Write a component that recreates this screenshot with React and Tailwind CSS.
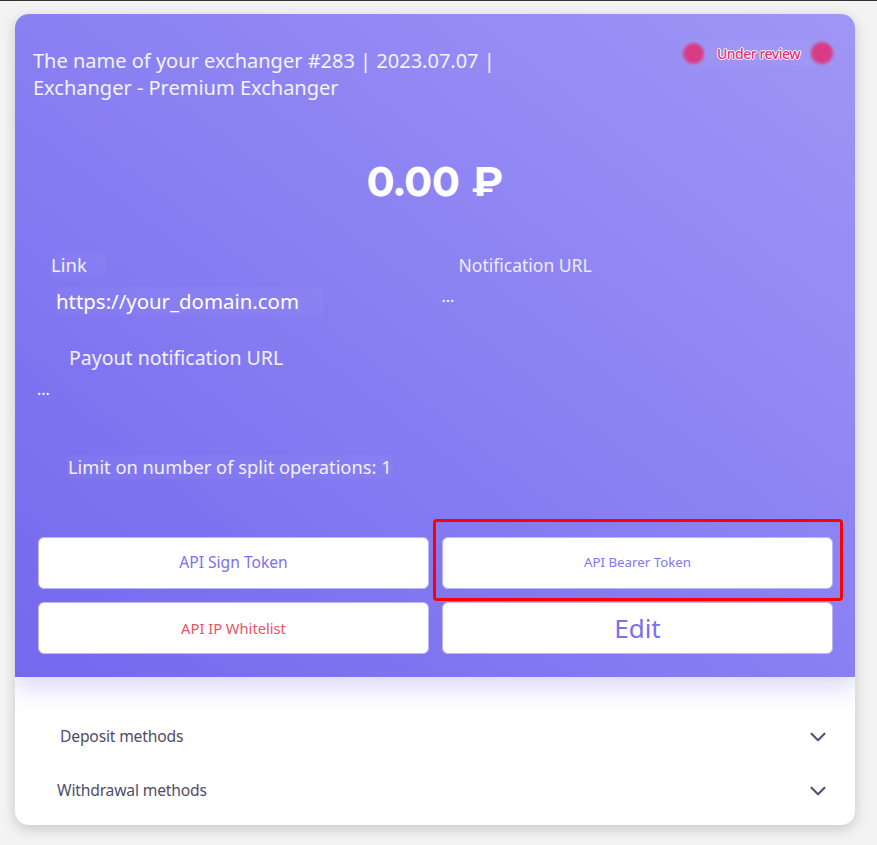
import React from 'react'
import { ChevronDown } from 'lucide-react'

const font = "font-['Noto_Sans','Open_Sans',sans-serif]"

const Methods = ({ label, pl }) => (
  <div className={`flex h-[54px] items-center justify-between pr-[24px] ${pl}`}>
    <span className="text-[15.7px] tracking-[-0.2px] text-[#4f4d68]">{label}</span>
    <ChevronDown size={26} strokeWidth={2} className="text-[#55546e]" />
  </div>
)

const Btn = ({ children, className }) => (
  <button className={`h-[52px] w-full rounded-[6px] border border-[#bdb6f6] bg-white ${className}`}>
    {children}
  </button>
)

export default function App() {
  return (
    <div className={`min-h-[845px] border-t border-[#333] bg-[#f3f3f4] pt-[13px] ${font}`}>
      <div className="mx-[15px] w-[840px] overflow-hidden rounded-[14px] bg-white shadow-[0_4px_14px_rgba(0,0,0,0.18)]">
        {/* header */}
        <div className="relative z-10 bg-linear-to-tr from-[#7468ee] to-[#9f96f6] pt-[33px] pb-[23px] text-white shadow-[0_12px_22px_rgba(120,110,240,0.25)]">
          <div className="flex justify-between pl-[18px] pr-[20px]">
            <h1 className="max-w-[480px] text-[20px] leading-[27px] text-white/90">
              The name of your exchanger #283 | 2023.07.07 | Exchanger - Premium Exchanger
            </h1>
            <div className="mt-[-7px] mr-[2px] flex h-[26px] items-center rounded bg-white/[0.04]">
              <span className="h-[21px] w-[21px] rounded-full bg-[#d83c84] blur-[1.5px]" />
              <span className="mr-[11px] ml-[13px] text-[14px] font-medium tracking-[-0.5px] text-[#e2307a] [text-shadow:1px_0_0_#fff,-1px_0_0_#fff,0_1px_0_#fff,0_-1px_0_#fff]">
                Under review
              </span>
              <span className="h-[22px] w-[22px] rounded-full bg-[#d83c84] blur-[1.5px]" />
            </div>
          </div>

          <div className="mt-[56px] text-center font-['Montserrat','Lato','Noto_Sans',sans-serif] text-[41px] font-bold leading-[48px]">
            0.00 ₽
          </div>

          <div className="mt-[48px] grid grid-cols-2 gap-x-[13px] px-[22px]">
            <div>
              <div className="ml-[14px] w-max rounded bg-white/[0.03] pr-[20px] text-[18.5px] leading-[24px] text-white/90">Link</div>
              <div className="mt-[10px] ml-[19px] w-max rounded bg-white/[0.03] pr-[24px] text-[20.4px] leading-[28px]">https://your_domain.com</div>
            </div>
            <div>
              <div className="ml-[17px] w-max text-[17.5px] leading-[24px] text-white/85">Notification URL</div>
              <div className="mt-[9px] text-[16px] leading-[20px]">...</div>
            </div>
          </div>

          <div className="mt-[31px] px-[22px]">
            <div className="ml-[32px] text-[19.5px] leading-[24px] text-white/90">Payout notification URL</div>
            <div className="mt-[9px] text-[16px] leading-[20px]">...</div>
          </div>

          <div className="mt-[56px] ml-[52px] w-max rounded bg-white/[0.03] px-[1px] text-[18.3px] leading-[24px] text-white/90">
            Limit on number of split operations: 1
          </div>

          <div className="mt-[58px] grid grid-cols-2 gap-[13px] pl-[23px] pr-[22px]">
            <Btn className="text-[15.6px] text-[#7d70ee]">API Sign Token</Btn>
            <div className="relative">
              <div className="absolute -top-[18px] -bottom-[12px] -left-[9px] -right-[10px] rounded-[4px] border-[3px] border-[#ff0000]" />
              <Btn className="relative text-[13.3px] text-[#8277ee]">API Bearer Token</Btn>
            </div>
            <Btn className="text-[14.7px] text-[#ea5266]">API IP Whitelist</Btn>
            <Btn className="text-[26px] text-[#7d70ee]">Edit</Btn>
          </div>
        </div>

        {/* methods */}
        <div className="pt-[33px] pb-[7px]">
          <Methods label="Deposit methods" pl="pl-[45px]" />
          <Methods label="Withdrawal methods" pl="pl-[42px]" />
        </div>
      </div>
    </div>
  )
}
